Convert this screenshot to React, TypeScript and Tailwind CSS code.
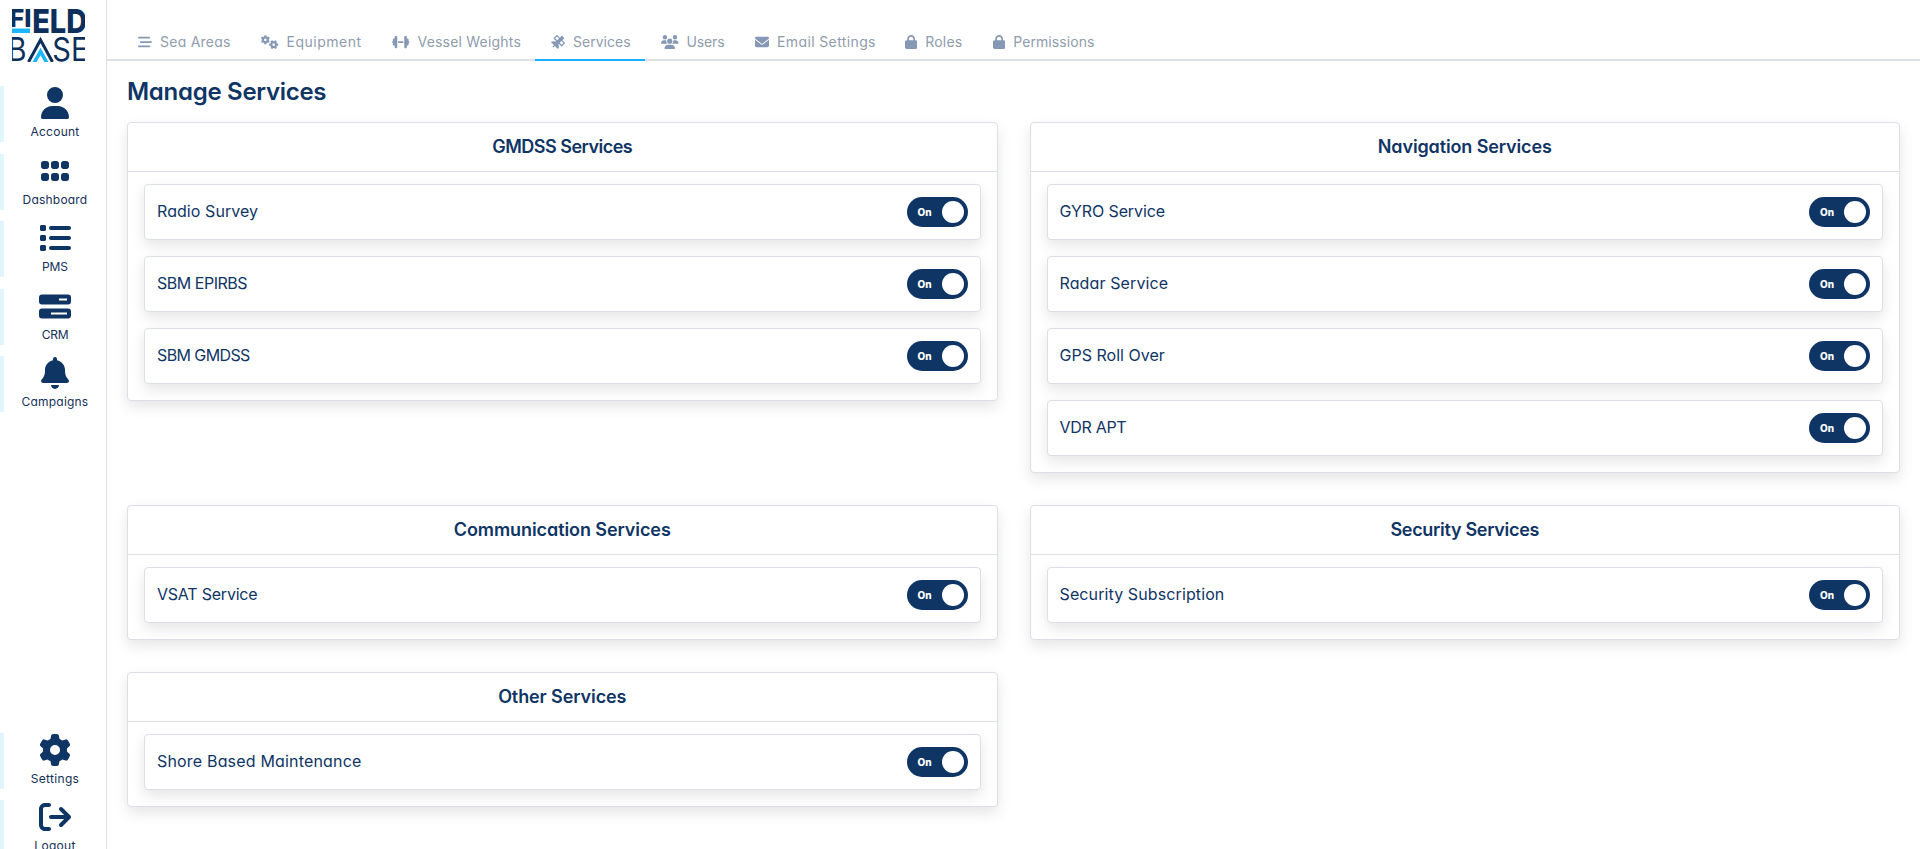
import { useState } from "react";
import type { ComponentType } from "react";
import {
  FaArrowRightFromBracket,
  FaBarsStaggered,
  FaBell,
  FaDumbbell,
  FaEnvelope,
  FaGear,
  FaGears,
  FaGrip,
  FaList,
  FaLock,
  FaSatellite,
  FaUser,
  FaUsers,
} from "react-icons/fa6";

type Icon = ComponentType<{ className?: string }>;

function Logo() {
  return (
    <svg
      className="mx-auto block h-[53px] w-[73px] overflow-hidden"
      viewBox="0 0 73 53"
      aria-label="Field Base"
    >
      <g fill="#0d2f5c" fontFamily="Inter, sans-serif" fontWeight="800">
        <text x="-2.5" y="18" fontSize="24.5" textLength="22" lengthAdjust="spacingAndGlyphs">FI</text>
        <text x="20.2" y="24" fontSize="33" textLength="55" lengthAdjust="spacingAndGlyphs">ELD</text>
      </g>
      <rect x="0" y="19.5" width="18" height="4.5" fill="#1fb6ff" />
      <g fill="#0d2f5c" fontFamily="Inter, sans-serif" fontWeight="400" fontSize="32">
        <text x="-4.5" y="52.3" textLength="19" lengthAdjust="spacingAndGlyphs">B</text>
        <text x="40.3" y="52.3" textLength="36" lengthAdjust="spacingAndGlyphs">SE</text>
      </g>
      <path d="M16.5 53 28.5 31 40.5 53" fill="none" stroke="#0d2f5c" strokeWidth="3" />
      <path d="M22 54 28.5 42.5 35 54" fill="none" stroke="#1fb6ff" strokeWidth="3.6" />
    </svg>
  );
}

function ServerIcon({ className }: { className?: string }) {
  return (
    <svg className={className} viewBox="0 0 32 32" fill="currentColor">
      <path
        fillRule="evenodd"
        d="M3 4.5h26a3 3 0 0 1 3 3v4a3 3 0 0 1-3 3H3a3 3 0 0 1-3-3v-4a3 3 0 0 1 3-3Zm17 4v2h8v-2Z"
      />
      <path
        fillRule="evenodd"
        d="M3 18.5h26a3 3 0 0 1 3 3v4a3 3 0 0 1-3 3H3a3 3 0 0 1-3-3v-4a3 3 0 0 1 3-3Zm9 4v2h16v-2Z"
      />
    </svg>
  );
}

const mainLinks: { label: string; icon: Icon; tracking: string }[] = [
  { label: "Account", icon: FaUser, tracking: "tracking-[0.25px]" },
  { label: "Dashboard", icon: FaGrip, tracking: "tracking-[0.2px]" },
  { label: "PMS", icon: FaList, tracking: "tracking-[-0.1px]" },
  { label: "CRM", icon: ServerIcon, tracking: "tracking-[-0.2px]" },
  { label: "Campaigns", icon: FaBell, tracking: "tracking-[0.2px]" },
];

const footerLinks: typeof mainLinks = [
  { label: "Settings", icon: FaGear, tracking: "tracking-[0.3px]" },
  { label: "Logout", icon: FaArrowRightFromBracket, tracking: "tracking-[0.3px]" },
];

const tabs: { label: string; icon: Icon; width: string; tracking: string; size: string }[] = [
  { label: "Sea Areas", icon: FaBarsStaggered, width: "w-[123px]", tracking: "tracking-[0.25px]", size: "w-[14px]" },
  { label: "Equipment", icon: FaGears, width: "w-[131px]", tracking: "tracking-[0.5px]", size: "w-[17.5px]" },
  { label: "Vessel Weights", icon: FaDumbbell, width: "w-[159px]", tracking: "tracking-[0.2px]", size: "w-[17.5px]" },
  { label: "Services", icon: FaSatellite, width: "w-[110px]", tracking: "tracking-[0.02px]", size: "w-[14px]" },
  { label: "Users", icon: FaUsers, width: "w-[94px]", tracking: "tracking-[-0.15px]", size: "w-[17.5px]" },
  { label: "Email Settings", icon: FaEnvelope, width: "w-[150px]", tracking: "tracking-[0.38px]", size: "w-[14px]" },
  { label: "Roles", icon: FaLock, width: "w-[88px]", tracking: "tracking-[0.2px]", size: "w-[12.25px]" },
  { label: "Permissions", icon: FaLock, width: "w-[132px]", tracking: "tracking-[0.08px]", size: "w-[12.25px]" },
];

const groups: {
  title: string;
  tracking: string;
  services: { name: string; tracking: string }[];
}[] = [
  {
    title: "GMDSS Services",
    tracking: "tracking-[-0.52px]",
    services: [
      { name: "Radio Survey", tracking: "tracking-[0.07px]" },
      { name: "SBM EPIRBS", tracking: "tracking-[-0.48px]" },
      { name: "SBM GMDSS", tracking: "tracking-[-0.6px]" },
    ],
  },
  {
    title: "Navigation Services",
    tracking: "tracking-[-0.13px]",
    services: [
      { name: "GYRO Service", tracking: "tracking-[-0.1px]" },
      { name: "Radar Service", tracking: "tracking-[0.12px]" },
      { name: "GPS Roll Over", tracking: "tracking-[0.02px]" },
      { name: "VDR APT", tracking: "tracking-[-0.3px]" },
    ],
  },
  {
    title: "Communication Services",
    tracking: "tracking-[-0.08px]",
    services: [{ name: "VSAT Service", tracking: "tracking-[-0.22px]" }],
  },
  {
    title: "Security Services",
    tracking: "tracking-[-0.3px]",
    services: [{ name: "Security Subscription", tracking: "tracking-[0.11px]" }],
  },
  {
    title: "Other Services",
    tracking: "tracking-[-0.1px]",
    services: [{ name: "Shore Based Maintenance", tracking: "tracking-[0.18px]" }],
  },
];

function SideLink({ label, icon: IconShape, tracking }: (typeof mainLinks)[number]) {
  return (
    <a className="flex h-14 shrink-0 flex-col items-center border-l-4 border-[#e1f5fe] pt-px">
      <IconShape className="h-8 w-8 shrink-0 text-[#0f3565]" />
      <span className={`mt-[5px] text-xs leading-4 text-[#142f58] ${tracking}`}>{label}</span>
    </a>
  );
}

function Toggle() {
  const [on, setOn] = useState(true);
  return (
    <button
      type="button"
      role="switch"
      aria-checked={on}
      onClick={() => setOn(!on)}
      className={`flex h-[30px] w-[61px] items-center justify-between rounded-full pr-1 pl-[11px] ${
        on ? "bg-[#0f3565]" : "flex-row-reverse bg-gray-400"
      }`}
    >
      <span className="text-[10px] leading-none font-extrabold text-white">{on ? "On" : "Off"}</span>
      <span className="size-[22px] rounded-full bg-white" />
    </button>
  );
}

export default function App() {
  const [active, setActive] = useState("Services");

  return (
    <div className="flex h-screen overflow-hidden bg-white font-['Inter',sans-serif] font-[370] text-[#0f3565] [font-feature-settings:'cv11']">
      <aside className="flex h-full w-[107px] shrink-0 flex-col overflow-hidden border-r border-[#dcdfe4]">
        <div className="h-[86px] shrink-0 pt-[9px] pr-[9px]">
          <Logo />
        </div>
        <nav className="flex shrink-0 flex-col gap-[11.5px]">
          {mainLinks.map((link) => (
            <SideLink key={link.label} {...link} />
          ))}
        </nav>
        <nav className="mt-[320.5px] flex shrink-0 flex-col gap-[11px]">
          {footerLinks.map((link) => (
            <SideLink key={link.label} {...link} />
          ))}
        </nav>
      </aside>

      <main className="min-w-0 flex-1">
        <div className="flex h-[61px] items-end border-b-2 border-[#dce1e7] pl-[15px]">
          {tabs.map(({ label, icon: IconShape, width, tracking, size }) => (
            <button
              key={label}
              type="button"
              onClick={() => setActive(label)}
              className={`-mb-0.5 flex h-9 shrink-0 items-start gap-2 border-b-2 pl-4 text-sm leading-[34px] whitespace-nowrap text-[#8f9cad] ${width} ${tracking} ${
                active === label ? "border-[#15b1fb]" : "border-transparent"
              }`}
            >
              <IconShape className={`mt-[10px] h-3.5 shrink-0 text-[#8598b5] ${size}`} />
              {label}
            </button>
          ))}
        </div>

        <div className="px-5">
          <h1 className="pt-[15px] text-2xl leading-8 font-semibold tracking-[-0.28px]">
            Manage Services
          </h1>
          <div className="mt-3.5 grid grid-cols-2 items-start gap-8">
            {groups.map((group) => (
              <section
                key={group.title}
                className="rounded border border-[#dcdfe6] bg-white shadow-[0_6px_14px_rgba(0,0,0,0.1)]"
              >
                <h2
                  className={`h-[49px] border-b border-[#dcdfe6] text-center text-lg leading-[48px] font-semibold ${group.tracking}`}
                >
                  {group.title}
                </h2>
                <div className="flex flex-col gap-4 px-4 pt-3 pb-4">
                  {group.services.map((service) => (
                    <div
                      key={service.name}
                      className="flex h-14 items-center justify-between rounded border border-[#dcdfe6] bg-white px-3 shadow-[0_6px_14px_rgba(0,0,0,0.1)]"
                    >
                      <span className={`pb-0.5 text-base leading-6 font-normal ${service.tracking}`}>
                        {service.name}
                      </span>
                      <Toggle />
                    </div>
                  ))}
                </div>
              </section>
            ))}
          </div>
        </div>
      </main>
    </div>
  );
}
